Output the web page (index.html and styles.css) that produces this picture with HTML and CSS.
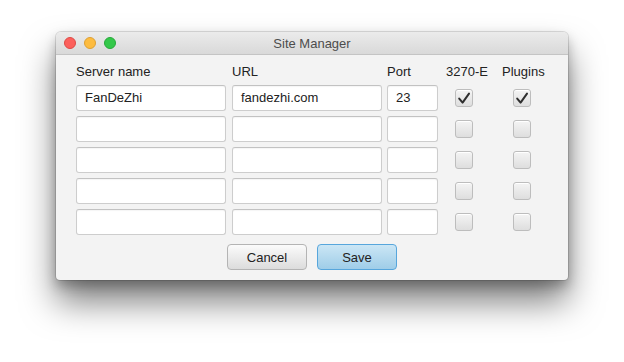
FILE: index.html
```html
<!DOCTYPE html>
<html lang="en">
<head>
    <meta charset="UTF-8">
    <meta name="viewport" content="width=device-width, initial-scale=1.0">
    <title>Site Manager</title>
    <link rel="stylesheet" href="styles.css">
</head>
<body>
    <div class="window">
        <div class="titlebar">
            <div class="lights">
                <span class="light red"></span>
                <span class="light yellow"></span>
                <span class="light green"></span>
            </div>
            <div class="title">Site Manager</div>
        </div>

        <div class="content">
            <div class="grid">
                <div class="head">Server name</div>
                <div class="head">URL</div>
                <div class="head">Port</div>
                <div class="head">3270-E</div>
                <div class="head">Plugins</div>

                <div class="field">FanDeZhi</div>
                <div class="field">fandezhi.com</div>
                <div class="field">23</div>
                <div class="check-cell c1"><span class="check on"><svg viewBox="0 0 16 16"><path d="M3.2 8.6 L6.6 12.6 L13 3.6"/></svg></span></div>
                <div class="check-cell c2"><span class="check on"><svg viewBox="0 0 16 16"><path d="M3.2 8.6 L6.6 12.6 L13 3.6"/></svg></span></div>

                <div class="field"></div>
                <div class="field"></div>
                <div class="field"></div>
                <div class="check-cell c1"><span class="check"></span></div>
                <div class="check-cell c2"><span class="check"></span></div>

                <div class="field"></div>
                <div class="field"></div>
                <div class="field"></div>
                <div class="check-cell c1"><span class="check"></span></div>
                <div class="check-cell c2"><span class="check"></span></div>

                <div class="field"></div>
                <div class="field"></div>
                <div class="field"></div>
                <div class="check-cell c1"><span class="check"></span></div>
                <div class="check-cell c2"><span class="check"></span></div>

                <div class="field"></div>
                <div class="field"></div>
                <div class="field"></div>
                <div class="check-cell c1"><span class="check"></span></div>
                <div class="check-cell c2"><span class="check"></span></div>
            </div>

            <div class="buttons">
                <button class="btn">Cancel</button>
                <button class="btn primary">Save</button>
            </div>
        </div>
    </div>
</body>
</html>
```

FILE: styles.css
```css
html, body {
    height: 100%;
}
body {
    margin: 0;
    padding-top: 32px;
    box-sizing: border-box;
    background: #fff;
    font-family: "Liberation Sans", Arial, sans-serif;
    font-size: 13px;
    color: #222;
}
.window {
    width: 512px;
    margin: 0 auto;
    background: #f3f3f3;
    border-radius: 5px 5px 4px 4px;
    box-shadow: 0 0 0 1px rgba(0, 0, 0, 0.12),
                0 6px 12px rgba(0, 0, 0, 0.25),
                0 22px 34px rgba(0, 0, 0, 0.5);
}
.titlebar {
    height: 22px;
    display: flex;
    align-items: center;
    position: relative;
    background: linear-gradient(#ebebeb, #d9d9d9);
    border-bottom: 1px solid #c4c4c4;
    border-radius: 5px 5px 0 0;
}
.lights {
    display: flex;
    gap: 8px;
    padding-left: 8px;
}
.light {
    width: 12px;
    height: 12px;
    border-radius: 50%;
    box-sizing: border-box;
}
.red { background: #fc605c; border: 1px solid #de4a45; }
.yellow { background: #fdbc40; border: 1px solid #dea033; }
.green { background: #34c84a; border: 1px solid #27a93a; }
.title {
    position: absolute;
    left: 0;
    right: 0;
    text-align: center;
    color: #4d4d4d;
    pointer-events: none;
}
.content {
    padding: 9px 20px 10px;
}
.grid {
    display: grid;
    grid-template-columns: 150px 150px 50px 50px 56px;
    column-gap: 6px;
    row-gap: 5px;
    grid-auto-rows: 26px;
    grid-template-rows: 16px;
}
.head {
    line-height: 16px;
    white-space: nowrap;
}
.head:nth-child(3) { margin-left: -1px; }
.head:nth-child(4) { padding-left: 2px; }
.head:nth-child(5) { padding-left: 2px; }
.field {
    box-sizing: border-box;
    height: 26px;
    background: #fff;
    border: 1px solid #cdcdcd;
    border-top-color: #c2c2c2;
    border-radius: 3px;
    box-shadow: inset 0 1px 1px rgba(0, 0, 0, 0.04);
    padding: 0 8px;
    line-height: 24px;
}
.field:nth-child(5n+3) { margin-left: -1px; }
.check-cell {
    display: flex;
    align-items: center;
}
.c1 { padding-left: 11px; }
.c2 { padding-left: 13px; }
.check {
    box-sizing: border-box;
    width: 18px;
    height: 18px;
    border: 1px solid #bdbdbd;
    border-radius: 3px;
    background: linear-gradient(#f4f4f4, #dedede);
    box-shadow: inset 0 1px 0 #fff;
}
.check svg {
    display: block;
    width: 16px;
    height: 16px;
    overflow: visible;
}
.check path {
    fill: none;
    stroke: #2e2e2e;
    stroke-width: 2;
    stroke-linecap: round;
    stroke-linejoin: round;
}
.buttons {
    display: flex;
    justify-content: center;
    gap: 10px;
    margin-top: 9px;
}
.btn {
    width: 80px;
    height: 26px;
    font-family: inherit;
    font-size: 13px;
    color: #222;
    border: 1px solid #b4b4b4;
    border-radius: 4px;
    background: linear-gradient(#fbfbfb, #dcdcdc);
    padding: 0;
}
.btn.primary {
    border-color: #57a6dc;
    background: linear-gradient(#cbe6f5, #9fcde8);
}
```
